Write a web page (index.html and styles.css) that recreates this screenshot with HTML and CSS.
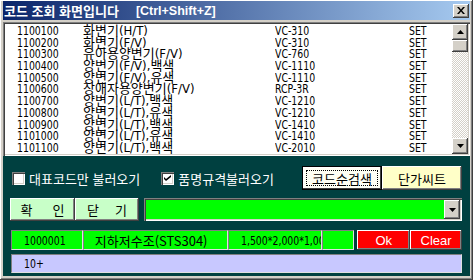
FILE: index.html
```html
<!DOCTYPE html>
<html lang="ko">
<head>
    <meta charset="UTF-8">
    <title>코드 조회 화면입니다</title>
    <link rel="stylesheet" href="styles.css">
</head>
<body>
    <div class="window">
        <div class="titlebar">
            <span class="title">코드 조회 화면입니다</span>
            <span class="shortcut">[Ctrl+Shift+Z]</span>
            <span class="close-btn">
                <svg width="8" height="7" viewBox="0 0 8 7"><path d="M0 0h2l2 2.5L6 0h2L5 3.5 8 7H6L4 4.5 2 7H0l3-3.5z" fill="#000"/></svg>
            </span>
        </div>

        <div class="listbox">
            <div class="rows">
                <div class="row"><span class="lat">1100100</span><span>화변기(H/T)</span><span class="lat">VC-310</span><span class="lat">SET</span></div>
                <div class="row"><span class="lat">1100200</span><span>화변기(F/V)</span><span class="lat">VC-310</span><span class="lat">SET</span></div>
                <div class="row"><span class="lat">1100300</span><span>유아용양변기(F/V)</span><span class="lat">VC-760</span><span class="lat">SET</span></div>
                <div class="row"><span class="lat">1100400</span><span>양변기(F/V),백색</span><span class="lat">VC-1110</span><span class="lat">SET</span></div>
                <div class="row"><span class="lat">1100500</span><span>양변기(F/V),유색</span><span class="lat">VC-1110</span><span class="lat">SET</span></div>
                <div class="row"><span class="lat">1100600</span><span>장애자용양변기(F/V)</span><span class="lat">RCP-3R</span><span class="lat">SET</span></div>
                <div class="row"><span class="lat">1100700</span><span>양변기(L/T),백색</span><span class="lat">VC-1210</span><span class="lat">SET</span></div>
                <div class="row"><span class="lat">1100800</span><span>양변기(L/T),유색</span><span class="lat">VC-1210</span><span class="lat">SET</span></div>
                <div class="row"><span class="lat">1100900</span><span>양변기(L/T),백색</span><span class="lat">VC-1410</span><span class="lat">SET</span></div>
                <div class="row"><span class="lat">1101000</span><span>양변기(L/T),유색</span><span class="lat">VC-1410</span><span class="lat">SET</span></div>
                <div class="row"><span class="lat">1101100</span><span>양변기(L/T),백색</span><span class="lat">VC-2010</span><span class="lat">SET</span></div>
            </div>
            <div class="scrollbar">
                <div class="sb-btn">
                    <svg width="7" height="4" viewBox="0 0 7 4"><path d="M3.5 0L7 4H0z" fill="#000"/></svg>
                </div>
                <div class="sb-thumb"></div>
                <div class="sb-track"></div>
                <div class="sb-btn">
                    <svg width="7" height="4" viewBox="0 0 7 4"><path d="M0 0h7L3.5 4z" fill="#000"/></svg>
                </div>
            </div>
        </div>

        <div class="panel">
            <div class="panel-row options">
                <label class="check">
                    <span class="box"></span>
                    대표코드만 불러오기
                </label>
                <label class="check check-second">
                    <span class="box">
                        <svg width="7" height="7" viewBox="0 0 7 7"><path d="M0 2l2 2 5-4v2l-5 4-2-2z" fill="#000"/></svg>
                    </span>
                    품명규격불러오기
                </label>
                <button class="btn btn-default">코드순검색</button>
                <button class="btn btn-yellow">단가씨트</button>
            </div>

            <div class="panel-row actions">
                <button class="btn btn-green btn-ok"><span>확</span><span>인</span></button>
                <button class="btn btn-green btn-close"><span>닫</span><span>기</span></button>
                <div class="combo">
                    <span class="combo-arrow">
                        <svg width="7" height="4" viewBox="0 0 7 4"><path d="M0 0h7L3.5 4z" fill="#000"/></svg>
                    </span>
                </div>
            </div>

            <div class="panel-row fields">
                <div class="field f-code"><span class="lat">1000001</span></div>
                <div class="field f-name">지하저수조(STS304)</div>
                <div class="field f-size"><span class="lat">1,500*2,000*1,000</span></div>
                <div class="field f-extra"></div>
                <button class="btn btn-red btn-okay">Ok</button>
                <button class="btn btn-red btn-clear">Clear</button>
            </div>

            <div class="panel-row">
                <div class="field memo"><span class="lat">10+</span></div>
            </div>
        </div>
    </div>
</body>
</html>
```

FILE: styles.css
```css
body {
    margin: 0;
    background-color: #d4d0c8;
    font-family: 'DejaVu Sans Condensed', 'Noto Sans CJK KR', sans-serif;
    font-size: 13px;
    color: #000;
}
.window {
    width: 473px;
    height: 280px;
    box-sizing: border-box;
    padding: 1px 3px 4px 3px;
    display: flex;
    flex-direction: column;
    background-color: #d4d0c8;
    box-shadow: inset -1px -1px #404040, inset 1px 1px #ffffff, inset -2px -2px #808080;
}
.titlebar {
    height: 19px;
    flex: none;
    display: flex;
    align-items: center;
    background: linear-gradient(to right, #0a246a, #a6caf0);
    color: #fff;
    font-family: 'Liberation Sans', 'Noto Sans CJK KR', sans-serif;
    font-weight: bold;
    font-size: 13px;
}
.title {
    margin-left: 1px;
}
.shortcut {
    margin-left: 17px;
    font-size: 12.5px;
}
.close-btn {
    margin-left: auto;
    margin-right: 1px;
    width: 16px;
    height: 14px;
    display: flex;
    align-items: center;
    justify-content: center;
    background-color: #d4d0c8;
    box-shadow: inset -1px -1px #404040, inset 1px 1px #ffffff, inset -2px -2px #808080;
}
.lat {
    display: inline-block;
    white-space: nowrap;
    transform: scaleX(0.8);
    transform-origin: left center;
}
.listbox {
    margin-top: 2px;
    height: 134px;
    flex: none;
    box-sizing: border-box;
    padding: 2px;
    display: flex;
    background-color: #fff;
    box-shadow: inset 1px 1px #808080, inset 2px 2px #404040, inset -1px -1px #ffffff, inset -2px -2px #d4d0c8;
    overflow: hidden;
}
.rows {
    flex: 1;
    padding-left: 12px;
    padding-top: 1px;
    overflow: hidden;
}
.row {
    display: grid;
    grid-template-columns: 66px 192px 134px auto;
    height: 11.7px;
    line-height: 11.7px;
    white-space: nowrap;
}
.scrollbar {
    width: 16px;
    display: flex;
    flex-direction: column;
}
.sb-btn, .sb-thumb {
    height: 16px;
    flex: none;
    display: flex;
    align-items: center;
    justify-content: center;
    background-color: #d4d0c8;
    box-sizing: border-box;
    box-shadow: inset -1px -1px #404040, inset 1px 1px #ffffff, inset -2px -2px #808080;
}
.sb-thumb {
    height: 12px;
}
.sb-track {
    flex: 1;
    background: repeating-conic-gradient(#d4d0c8 0 25%, #ffffff 0 50%) 0 0 / 2px 2px;
}
.panel {
    flex: 1;
    background-color: #004040;
    padding: 10px 8px 0 7px;
    display: flex;
    flex-direction: column;
}
.panel-row {
    display: flex;
    align-items: center;
}
.options {
    height: 24px;
}
.check {
    display: flex;
    align-items: center;
    color: #fff;
    font-family: 'Noto Sans CJK KR', sans-serif;
    font-size: 13px;
    margin-left: 2px;
}
.check-second {
    margin-left: 21px;
}
.box {
    width: 13px;
    height: 13px;
    box-sizing: border-box;
    margin-right: 4px;
    display: flex;
    align-items: center;
    justify-content: center;
    background-color: #fff;
    box-shadow: inset 1px 1px #808080, inset 2px 2px #404040, inset -1px -1px #ffffff, inset -2px -2px #d4d0c8;
}
.btn {
    box-sizing: border-box;
    border: none;
    padding: 0;
    margin: 0;
    font-family: 'Noto Sans CJK KR', sans-serif;
    font-size: 13px;
    color: #000;
    display: flex;
    align-items: center;
    justify-content: center;
    box-shadow: inset -1px -1px #404040, inset 1px 1px #ffffff, inset -2px -2px #808080;
}
.btn-default {
    margin-left: auto;
    width: 80px;
    height: 24px;
    background-color: #fffff4;
    box-shadow: inset 0 0 0 1px #000, inset -2px -2px #404040, inset 2px 2px #ffffff;
    outline: 1px dotted #000;
    outline-offset: -5px;
}
.btn-yellow {
    width: 80px;
    height: 24px;
    background-color: #ffffc8;
}
.actions {
    margin-top: 8px;
    height: 23px;
}
.btn-green {
    height: 23px;
    background-color: #c8ffc8;
}
.btn-ok {
    width: 65px;
    gap: 20px;
}
.btn-close {
    width: 64px;
    gap: 16px;
}
.combo {
    margin-left: 5px;
    flex: 1;
    height: 23px;
    box-sizing: border-box;
    padding: 2px;
    display: flex;
    justify-content: flex-end;
    background-color: #00ff00;
    box-shadow: inset 1px 1px #808080, inset 2px 2px #404040, inset -1px -1px #ffffff, inset -2px -2px #d4d0c8;
}
.combo-arrow {
    width: 16px;
    display: flex;
    align-items: center;
    justify-content: center;
    background-color: #d4d0c8;
    box-shadow: inset -1px -1px #404040, inset 1px 1px #ffffff, inset -2px -2px #808080;
}
.fields {
    margin-top: 9px;
    height: 20px;
    padding-left: 1px;
}
.field {
    height: 20px;
    box-sizing: border-box;
    padding: 0 0 0 12px;
    display: flex;
    align-items: center;
    overflow: hidden;
    white-space: nowrap;
    background-color: #00ff00;
    border: 1px solid;
    border-color: #808080 #e0e0e0 #e0e0e0 #808080;
}
.f-code {
    width: 72px;
}
.f-name {
    width: 145px;
    font-family: 'Noto Sans CJK KR', sans-serif;
    font-size: 13px;
    padding-left: 11px;
}
.f-size {
    width: 95px;
}
.f-extra {
    width: 32px;
}
.btn-red {
    height: 20px;
    background-color: #ff0000;
    color: #fff;
    font-family: 'Liberation Sans', sans-serif;
    font-size: 13px;
}
.btn-okay {
    margin-left: 3px;
    width: 53px;
}
.btn-clear {
    width: 52px;
}
.memo {
    margin-top: 4px;
    margin-left: 1px;
    flex: 1;
    height: 19px;
    background-color: #c8c8ff;
}
```
